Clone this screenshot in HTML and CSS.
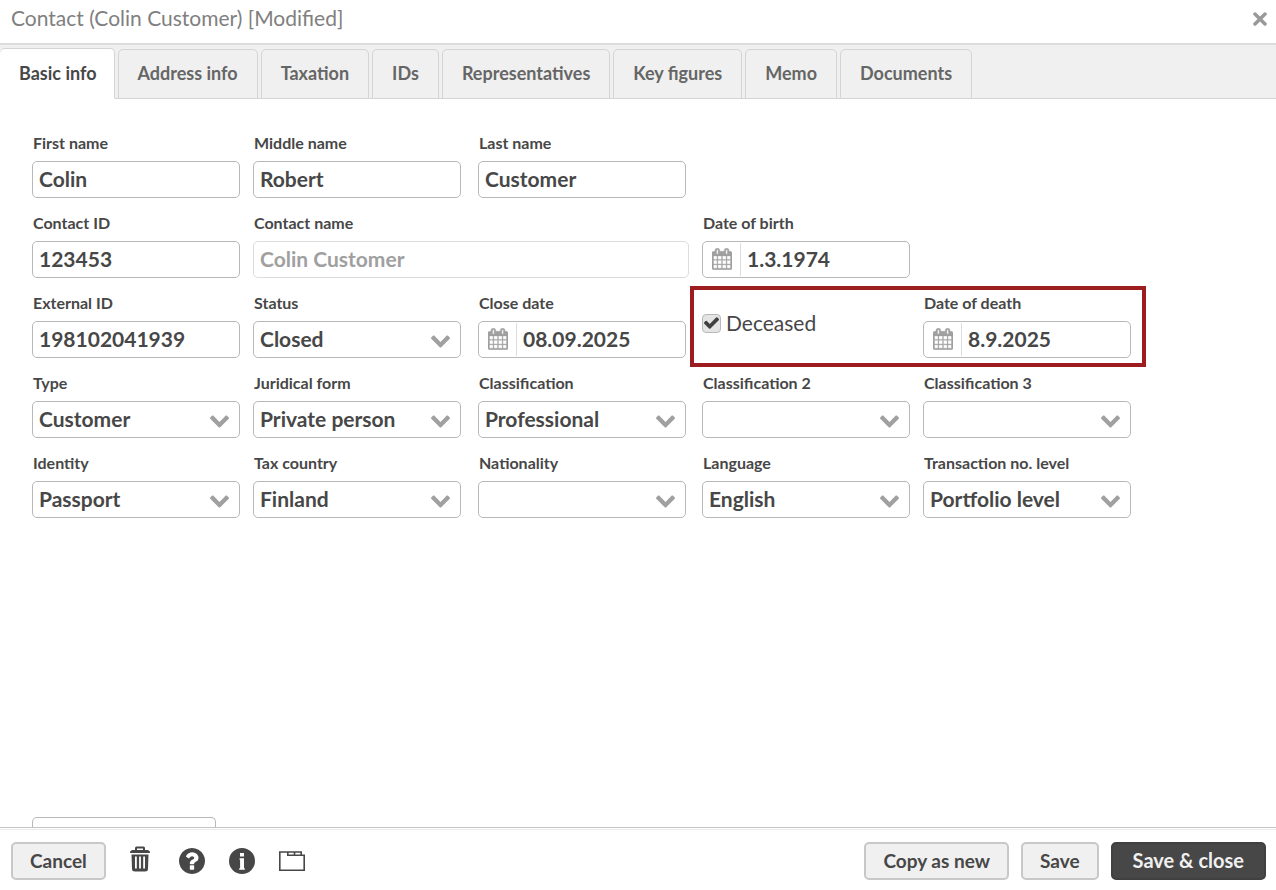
FILE: index.html
```html
<!DOCTYPE html>
<html lang="en">
<head>
  <meta charset="utf-8">
  <title>Contact (Colin Customer)</title>
  <link rel="stylesheet" href="styles.css">
</head>
<body>
  <!-- shared icons -->
  <svg class="sprite" aria-hidden="true">
    <symbol id="chevron" viewBox="90 533 1612 1035">
      <path d="M1683 808l-742 741q-19 19-45 19t-45-19l-742-741q-19-19-19-45.500t19-45.500l166-165q19-19 45-19t45 19l531 531 531-531q19-19 45-19t45 19l166 165q19 19 19 45.500t-19 45.500z"/>
    </symbol>
    <symbol id="calendar" viewBox="64 0 1664 1792">
      <path d="M192 1664h288v-288h-288v288zm352 0h320v-288h-320v288zm-352-352h288v-320h-288v320zm352 0h320v-320h-320v320zm-352-384h288v-288h-288v288zm736 736h320v-288h-320v288zm-384-736h320v-288h-320v288zm768 736h288v-288h-288v288zm-384-352h320v-320h-320v320zm-352-864v-288q0-13-9.500-22.500t-22.500-9.500h-64q-13 0-22.500 9.500t-9.500 22.500v288q0 13 9.500 22.500t22.500 9.500h64q13 0 22.500-9.500t9.500-22.500zm736 864h288v-320h-288v320zm-384-384h320v-288h-320v288zm384 0h288v-288h-288v288zm32-480v-288q0-13-9.500-22.500t-22.500-9.500h-64q-13 0-22.500 9.500t-9.500 22.500v288q0 13 9.500 22.500t22.500 9.500h64q13 0 22.500-9.500t9.500-22.500zm384-64v1280q0 52-38 90t-90 38h-1408q-52 0-90-38t-38-90v-1280q0-52 38-90t90-38h128v-96q0-66 47-113t113-47h64q66 0 113 47t47 113v96h384v-96q0-66 47-113t113-47h64q66 0 113 47t47 113v96h128q52 0 90 38t38 90z"/>
    </symbol>
  </svg>

  <div class="dialog">
    <header class="titlebar">
      <h1>Contact (Colin Customer) [Modified]</h1>
      <button class="close" type="button" aria-label="Close">
        <svg width="14" height="14" viewBox="0 0 14 14"><path d="M2 2l10 10M12 2L2 12"/></svg>
      </button>
    </header>

    <nav class="tabs">
      <button class="tab active" type="button">Basic info</button>
      <button class="tab" type="button">Address info</button>
      <button class="tab" type="button">Taxation</button>
      <button class="tab" type="button">IDs</button>
      <button class="tab" type="button">Representatives</button>
      <button class="tab" type="button">Key figures</button>
      <button class="tab" type="button">Memo</button>
      <button class="tab" type="button">Documents</button>
    </nav>

    <main class="content">
      <form class="form" id="contactForm">
        <div class="field">
          <label for="firstName">First name</label>
          <input class="control" type="text" id="firstName" value="Colin">
        </div>
        <div class="field">
          <label for="middleName">Middle name</label>
          <input class="control" type="text" id="middleName" value="Robert">
        </div>
        <div class="field row-end">
          <label for="lastName">Last name</label>
          <input class="control" type="text" id="lastName" value="Customer">
        </div>

        <div class="field">
          <label for="contactId">Contact ID</label>
          <input class="control" type="text" id="contactId" value="123453">
        </div>
        <div class="field wide">
          <label for="contactName">Contact name</label>
          <input class="control" type="text" id="contactName" value="Colin Customer" disabled>
        </div>
        <div class="field birth">
          <label for="birthDate">Date of birth</label>
          <div class="control date">
            <span class="date-icon"><svg><use href="#calendar"/></svg></span>
            <input type="text" id="birthDate" value="1.3.1974">
          </div>
        </div>

        <div class="field">
          <label for="externalId">External ID</label>
          <input class="control" type="text" id="externalId" value="198102041939">
        </div>
        <div class="field">
          <label for="status">Status</label>
          <div class="dropdown">
            <select class="control" id="status"><option>Closed</option></select>
            <svg><use href="#chevron"/></svg>
          </div>
        </div>
        <div class="field">
          <label for="closeDate">Close date</label>
          <div class="control date">
            <span class="date-icon"><svg><use href="#calendar"/></svg></span>
            <input type="text" id="closeDate" value="08.09.2025">
          </div>
        </div>
        <div class="death">
          <label class="check">
            <input type="checkbox" checked>
            <svg viewBox="121 334 1550 1188"><path d="M1671 566q0 40-28 68l-724 724-136 136q-28 28-68 28t-68-28l-136-136-362-362q-28-28-28-68t28-68l136-136q28-28 68-28t68 28l294 295 656-657q28-28 68-28t68 28l136 136q28 28 28 68z"/></svg>
            <span>Deceased</span>
          </label>
          <div class="field">
            <label for="deathDate">Date of death</label>
            <div class="control date">
              <span class="date-icon"><svg><use href="#calendar"/></svg></span>
              <input type="text" id="deathDate" value="8.9.2025">
            </div>
          </div>
        </div>

        <div class="field">
          <label for="type">Type</label>
          <div class="dropdown">
            <select class="control" id="type"><option>Customer</option></select>
            <svg><use href="#chevron"/></svg>
          </div>
        </div>
        <div class="field">
          <label for="juridicalForm">Juridical form</label>
          <div class="dropdown">
            <select class="control" id="juridicalForm"><option>Private person</option></select>
            <svg><use href="#chevron"/></svg>
          </div>
        </div>
        <div class="field">
          <label for="classification">Classification</label>
          <div class="dropdown">
            <select class="control" id="classification"><option>Professional</option></select>
            <svg><use href="#chevron"/></svg>
          </div>
        </div>
        <div class="field">
          <label for="classification2">Classification 2</label>
          <div class="dropdown">
            <select class="control" id="classification2"><option></option></select>
            <svg><use href="#chevron"/></svg>
          </div>
        </div>
        <div class="field">
          <label for="classification3">Classification 3</label>
          <div class="dropdown">
            <select class="control" id="classification3"><option></option></select>
            <svg><use href="#chevron"/></svg>
          </div>
        </div>

        <div class="field">
          <label for="identity">Identity</label>
          <div class="dropdown">
            <select class="control" id="identity"><option>Passport</option></select>
            <svg><use href="#chevron"/></svg>
          </div>
        </div>
        <div class="field">
          <label for="taxCountry">Tax country</label>
          <div class="dropdown">
            <select class="control" id="taxCountry"><option>Finland</option></select>
            <svg><use href="#chevron"/></svg>
          </div>
        </div>
        <div class="field">
          <label for="nationality">Nationality</label>
          <div class="dropdown">
            <select class="control" id="nationality"><option></option></select>
            <svg><use href="#chevron"/></svg>
          </div>
        </div>
        <div class="field">
          <label for="language">Language</label>
          <div class="dropdown">
            <select class="control" id="language"><option>English</option></select>
            <svg><use href="#chevron"/></svg>
          </div>
        </div>
        <div class="field">
          <label for="transactionLevel">Transaction no. level</label>
          <div class="dropdown">
            <select class="control" id="transactionLevel"><option>Portfolio level</option></select>
            <svg><use href="#chevron"/></svg>
          </div>
        </div>
      </form>
      <div class="drawer"></div>
    </main>

    <footer class="footer">
      <button class="btn" type="button">Cancel</button>
      <div class="tools">
        <button class="tool" type="button" aria-label="Delete">
          <svg viewBox="2 2 26 26">
            <path d="M8 4V2q0-1.500 1.500-1.500h7q1.500 0 1.500 1.500v2h-2V2.500h-6V4z"/>
            <path d="M3 7q0-3 3-3h14q3 0 3 3z"/>
            <path fill-rule="evenodd" d="M4.500 8.500h17l-.5 14.500q0 2.500-3 2.500H8q-3 0-3-2.500zM8 10.500v12h1.800v-12zM12.100 10.500v12h1.800v-12zM16.200 10.500v12h1.800v-12z"/>
          </svg>
        </button>
        <button class="tool" type="button" aria-label="Help">
          <svg viewBox="128 128 1536 1536"><path d="M1024 1376v-192q0-14-9-23t-23-9h-192q-14 0-23 9t-9 23v192q0 14 9 23t23 9h192q14 0 23-9t9-23zm256-672q0-88-55.500-163t-138.500-116-170-41q-243 0-371 213-15 24 8 42l132 100q7 6 19 6 16 0 25-12 53-68 86-92 34-24 86-24 48 0 85.500 26t37.500 59q0 38-20 61t-68 45q-63 28-115.500 86.500t-52.500 125.500v36q0 14 9 23t23 9h192q14 0 23-9t9-23q0-19 21.500-49.500t54.500-49.500q32-18 49-28.500t46-35 44.500-48 28-60.500 12.500-81zm384 192q0 209-103 385.500t-279.500 279.500-385.500 103-385.500-103-279.500-279.500-103-385.500 103-385.500 279.500-279.500 385.500-103 385.500 103 279.500 279.500 103 385.500z"/></svg>
        </button>
        <button class="tool" type="button" aria-label="Info">
          <svg viewBox="0 0 26 26"><path fill-rule="evenodd" d="M13 0a13 13 0 1 0 0 26a13 13 0 1 0 0-26zM11 5h4v3.500h-4zM10.600 10.200h4.400v10h.8V21.800h-5.600v-1.600h.9v-8.400h-.5z"/></svg>
        </button>
        <button class="tool" type="button" aria-label="Open in window">
          <svg class="outline" viewBox="0 0 26 26"><path d="M.8 4h8v3.300h16.400v15H.8zM8.800 4h13.400v3.300M15.500 4v3.300"/></svg>
        </button>
      </div>
      <button class="btn" type="button">Copy as new</button>
      <button class="btn" type="button">Save</button>
      <button class="btn primary" type="submit" form="contactForm">Save &amp; close</button>
    </footer>
  </div>
</body>
</html>
```
FILE: styles.css
```css
* {
  box-sizing: border-box;
}
body {
  margin: 0;
  background: #fff;
  color: #474747;
  font-family: Lato, sans-serif;
}
button, input, select {
  font: inherit;
  color: inherit;
  margin: 0;
}
.sprite {
  display: none;
}
.dialog {
  display: flex;
  flex-direction: column;
  height: 100vh;
}

/* title bar */
.titlebar {
  display: flex;
  justify-content: space-between;
  align-items: center;
  height: 43px;
  padding: 0 8px 5px 11px;
}
.titlebar h1 {
  margin: 0;
  padding-bottom: 3px;
  font-size: 21px;
  line-height: 24px;
  font-weight: 400;
  color: #808080;
}
.close {
  display: flex;
  padding: 1px;
  border: none;
  background: none;
  cursor: pointer;
}
.close path {
  stroke: #999;
  stroke-width: 3.500;
  stroke-linecap: round;
}

/* tabs */
.tabs {
  display: flex;
  align-items: flex-end;
  gap: 3px;
  height: 56px;
  background: #f0f0f0;
  border-top: 2px solid #dcdcdc;
  box-shadow: inset 0 -1px #d4d4d4;
}
.tab {
  height: 50px;
  padding: 0 19px 2px;
  border: 1px solid #d4d4d4;
  border-radius: 5px 5px 0 0;
  background: #f0f0f0;
  color: #666;
  font-size: 18px;
  font-weight: 700;
  cursor: pointer;
}
.tab.active {
  height: 51px;
  padding-right: 17px;
  border-left: none;
  border-bottom-color: #fff;
  background: #fff;
  color: #474747;
}

/* form */
.content {
  flex: 1;
  display: flex;
  flex-direction: column;
  justify-content: space-between;
  min-height: 0;
  overflow: hidden;
  padding: 34px 32px 0;
}
.form {
  display: grid;
  grid-template-columns: 221px 225px 224px 221px 208px;
  row-gap: 15px;
}
.field {
  width: 208px;
}
.field label {
  display: block;
  margin-bottom: 8px;
  padding-left: 1px;
  font-size: 16px;
  line-height: 20px;
  font-weight: 700;
}
.row-end {
  grid-column: 3 / -1;
}
.wide {
  grid-column: span 2;
  width: 436px;
}
.birth {
  grid-column: 4 / -1;
}
.control {
  display: block;
  width: 100%;
  height: 37px;
  padding: 0 6px 2px;
  border: 1px solid #b8b8b8;
  border-radius: 5px;
  background: #fff;
  font-size: 21px;
  font-weight: 700;
}
.control:disabled {
  border-color: #dcdcdc;
  color: #a0a0a0;
  opacity: 1;
}
.date {
  display: flex;
  padding: 0;
}
.date-icon {
  display: flex;
  align-items: center;
  justify-content: center;
  width: 38px;
  margin: 1px 0;
  padding-bottom: 2px;
  border-right: 1px solid #dcdcdc;
}
.date-icon svg {
  width: 20px;
  height: 22px;
  fill: #a0a0a0;
  stroke: #a0a0a0;
  stroke-width: 30;
}
.date input {
  flex: 1;
  min-width: 0;
  padding: 0 6px 2px;
  border: none;
  background: none;
}
.dropdown {
  display: grid;
  align-items: center;
}
.dropdown select, .dropdown svg {
  grid-area: 1 / 1;
}
.dropdown select {
  appearance: none;
}
.dropdown svg {
  justify-self: end;
  width: 19px;
  height: 13px;
  margin: 3px 11px 0 0;
  fill: #a0a0a0;
  pointer-events: none;
}

/* deceased group */
.death {
  position: relative;
  grid-column: 4 / -1;
  display: grid;
  grid-template-columns: 221px 208px;
}
.death::after {
  content: "";
  position: absolute;
  inset: -7px -15px -9px -12px;
  border: 4px solid #9c1c20;
  pointer-events: none;
}
.check {
  display: grid;
  grid-template-columns: 19px 1fr;
  align-items: center;
  column-gap: 5px;
  height: 60px;
  font-size: 21px;
}
.check input {
  grid-area: 1 / 1;
  appearance: none;
  width: 19px;
  height: 19px;
  border: 1px solid #b8b8b8;
  border-radius: 4px;
  background: #e4e4e4;
}
.check svg {
  grid-area: 1 / 1;
  justify-self: center;
  width: 15px;
  height: 12px;
  fill: #404040;
  visibility: hidden;
}
.check input:checked + svg {
  visibility: visible;
}
.check span {
  padding-bottom: 2px;
}

.drawer {
  flex: none;
  width: 184px;
  height: 10px;
  border: 1px solid #b8b8b8;
  border-bottom: none;
  border-radius: 5px 5px 0 0;
}

/* footer */
.footer {
  display: flex;
  align-items: center;
  gap: 12px;
  height: 63px;
  padding: 6px 10px 2px 11px;
  border-top: 1px solid #c4c4c4;
  box-shadow: inset 0 1px #fff, inset 0 2px #ececec;
}
.btn {
  height: 38px;
  padding: 0 17px 2px;
  border: 2px solid #c8c8c8;
  border-radius: 5px;
  background: #f0f0f0;
  font-size: 19px;
  font-weight: 700;
  cursor: pointer;
}
.btn.primary {
  padding: 0 20px 2px;
  border-color: #404040;
  background: #474747;
  color: #f0f0f0;
  font-size: 20px;
}
.tools {
  flex: 1;
  display: flex;
  gap: 24px;
  padding-left: 11px;
}
.tool {
  padding: 0;
  border: none;
  background: none;
  cursor: pointer;
}
.tool svg {
  display: block;
  width: 26px;
  height: 26px;
  overflow: visible;
  fill: #474747;
}
.tool .outline {
  fill: none;
  stroke: #474747;
  stroke-width: 1.600;
}
```
